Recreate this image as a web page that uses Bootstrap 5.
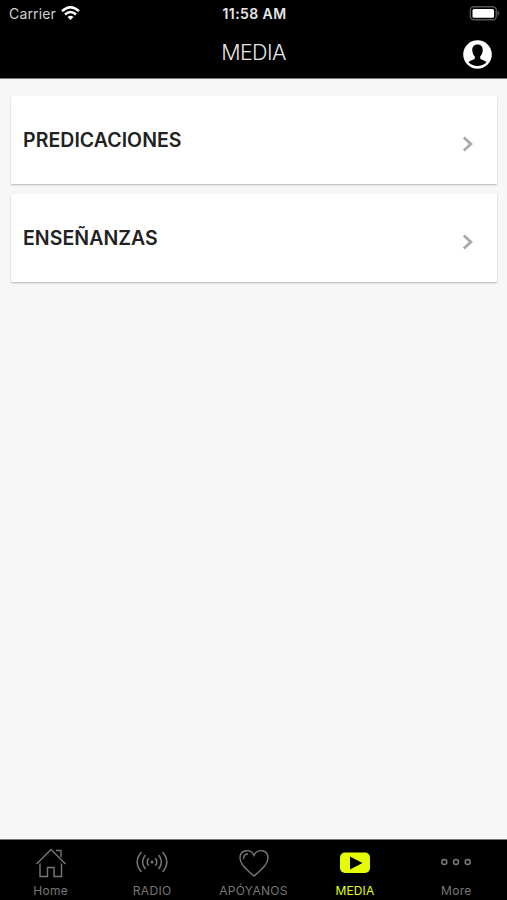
<!DOCTYPE html>
<html lang="es">
<head>
<meta charset="utf-8">
<meta name="viewport" content="width=device-width, initial-scale=1">
<title>MEDIA</title>
<link href="https://cdn.jsdelivr.net/npm/bootstrap@5.3.0/dist/css/bootstrap.min.css" rel="stylesheet">
<style>
body{font-family:Inter,"Liberation Sans",sans-serif;background:#f7f7f7;color:#222}
svg{display:block;flex:none}
.app-head{background:#000;height:79px;border-bottom:1px solid #777}
.status-line{height:27px;padding:0 7px 0 9px;font-size:14px;line-height:26px}
.carrier{color:#d2d2d2;letter-spacing:.15px;margin-right:5px}
.clock{color:#e6e6e6;font-weight:600;font-size:14px;letter-spacing:.4px;padding-top:1px}
.title-line{height:51px;padding:0 15px}
.page-title{font-size:21.5px;font-weight:300;color:#e4e4e4;letter-spacing:-.6px;line-height:51px}
.media-list{padding:17px 10px 0 11px;gap:10px}
.media-item{height:88px;border:0;border-radius:1px;background:#fff;box-shadow:0 1px 2px rgba(0,0,0,.27);padding:0 24px 0 12px}
.media-item h2{font-size:19.5px;font-weight:600;line-height:88px;letter-spacing:.05px}
.media-item svg{margin-top:8px}
.tabs-bar{background:#000;height:61px;border-top:1px solid #777;color:#777}
.tabs-bar a{color:inherit;font-size:12px;line-height:16px;padding-top:7px}
.tabs-bar a.active{color:#e4fd02}
.tabs-bar span{margin-top:4px;letter-spacing:.3px}
.tabs-bar a.active span{letter-spacing:.15px}
</style>
<script src="https://cdn.jsdelivr.net/npm/bootstrap@5.3.0/dist/js/bootstrap.bundle.min.js"></script>
</head>
<body class="vh-100 d-flex flex-column overflow-hidden">
<header class="app-head flex-shrink-0">
  <div class="status-line row g-0 align-items-center">
    <div class="col d-flex align-items-center"><span class="carrier">Carrier</span>
      <svg width="19" height="15" viewBox="0 0 19 15" fill="none" stroke="#fff" stroke-width="2.5"><path d="M1 5.2Q9.500-2.600 18 5.200M4 8.500Q9.500 3.500 15 8.500"/><path d="M9.500 14 6.500 11Q9.500 8.500 12.500 11Z" fill="#fff" stroke="none"/></svg>
    </div>
    <div class="col-auto clock">11:58 AM</div>
    <div class="col d-flex justify-content-end">
      <svg width="31" height="15" viewBox="0 0 31 15"><rect x="1.300" y=".8" width="26" height="13" rx="3.500" fill="none" stroke="#555" stroke-width="1.400"/><rect x="3.500" y="3" width="21.500" height="8.800" rx="1.500" fill="#fff"/><path d="M28.500 4.500Q32 7.200 28.500 10Z" fill="#555"/></svg>
    </div>
  </div>
  <div class="title-line row g-0 align-items-center">
    <div class="col"></div>
    <h1 class="col-auto page-title m-0">MEDIA</h1>
    <div class="col d-flex justify-content-end">
      <svg class="mt-1" width="29" height="29" viewBox="0 0 29 29"><circle cx="14.500" cy="14.500" r="14.300" fill="#fff"/><path d="M14.500 4.600c3.600 0 5.500 2.300 5.200 6.200-.2 2.700-1.100 4.200-2.500 5.800v1.900c1 1.600 4.500 1.500 6.300 3.700-4.800 5-13.200 5-18 0 1.800-2.200 5.300-2.100 6.300-3.700v-1.900c-1.400-1.600-2.300-3.100-2.500-5.800-.3-3.900 1.600-6.200 5.200-6.200Z" fill="#000"/></svg>
    </div>
  </div>
</header>
<main class="media-list flex-grow-1 d-flex flex-column">
  <div class="media-item card flex-row align-items-center justify-content-between"><h2 class="m-0">PREDICACIONES</h2>
    <svg width="11" height="16" viewBox="0 0 11 16" fill="none" stroke="#aaa" stroke-width="2.900"><path d="M1.800 1.500 8.800 8l-7 6.500"/></svg></div>
  <div class="media-item card flex-row align-items-center justify-content-between"><h2 class="m-0">ENSEÑANZAS</h2>
    <svg width="11" height="16" viewBox="0 0 11 16" fill="none" stroke="#aaa" stroke-width="2.900"><path d="M1.800 1.500 8.800 8l-7 6.500"/></svg></div>
</main>
<nav class="tabs-bar row g-0 flex-shrink-0">
  <a class="col d-flex flex-column align-items-center text-decoration-none" href="#">
    <svg width="32" height="32" viewBox="0 0 32 32" fill="none" stroke="currentColor" stroke-width="1.400"><path d="M1.500 17 16 2.500 30.500 17M5 16.500v13h7.500v-9h6.500v9h7.500v-13M21 3.500h5v6.500"/></svg><span>Home</span></a>
  <a class="col d-flex flex-column align-items-center text-decoration-none" href="#">
    <svg width="32" height="32" viewBox="0 0 32 32" fill="none" stroke="currentColor" stroke-width="1.500"><circle cx="16" cy="15" r="1.500" fill="currentColor" stroke="none"/><path d="M12.700 11.300q-2.900 3.700 0 7.400M19.300 11.300q2.900 3.700 0 7.400M9.300 8q-5.400 7 0 14M22.700 8q5.400 7 0 14M5.500 5q-8.600 10 0 20M26.500 5q8.600 10 0 20"/></svg><span>RADIO</span></a>
  <a class="col d-flex flex-column align-items-center text-decoration-none" href="#">
    <svg width="32" height="32" viewBox="0 0 32 32" fill="none" stroke="currentColor" stroke-width="1.400"><path d="M16 29C10 23.500 2 18 2 11c0-9 11-9.500 14-2.500C19 1.500 30 2 30 11c0 7-8 12.500-14 18ZM5.500 12c0-3.200 1.500-5 4.500-5"/></svg><span>APÓYANOS</span></a>
  <a class="col d-flex flex-column align-items-center text-decoration-none active" href="#">
    <svg width="32" height="32" viewBox="0 0 32 32"><rect x="1" y="5.500" width="30" height="20.500" rx="5" fill="currentColor"/><path d="M11 9.500v13L23.500 16Z" fill="#000"/></svg><span>MEDIA</span></a>
  <a class="col d-flex flex-column align-items-center text-decoration-none" href="#">
    <svg width="32" height="32" viewBox="0 0 32 32" fill="none" stroke="currentColor" stroke-width="1.500"><circle cx="4.300" cy="15" r="2.500"/><circle cx="16" cy="15" r="2.500"/><circle cx="27.700" cy="15" r="2.500"/></svg><span>More</span></a>
</nav>
</body>
</html>
